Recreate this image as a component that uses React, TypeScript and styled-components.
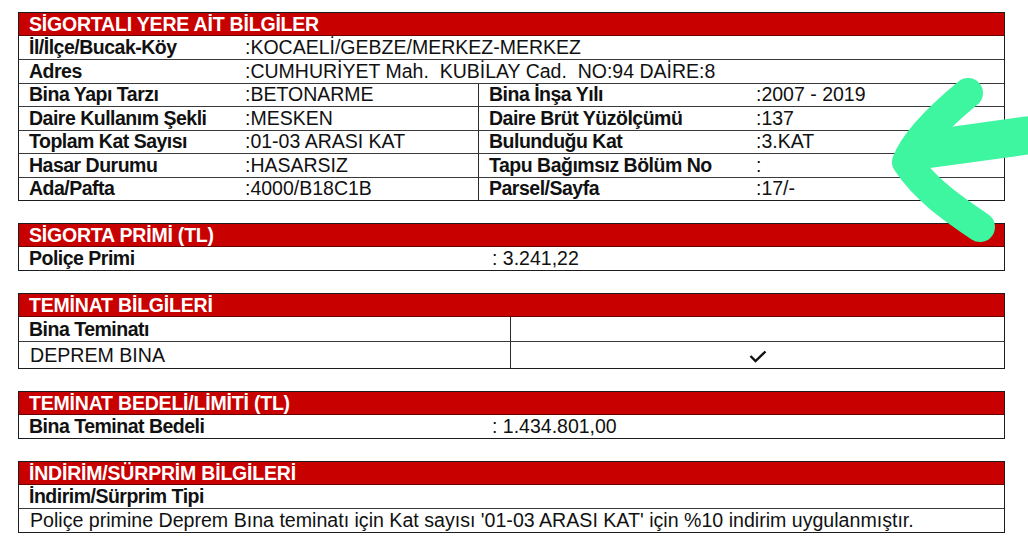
import React from "react";
import styled, { createGlobalStyle, css } from "styled-components";

const Global = createGlobalStyle`
  html, body { margin: 0; padding: 0; background: #fff; }
  body { font-family: "Liberation Sans", Arial, sans-serif; color: #111; }
`;

const Page = styled.div`
  position: relative;
  width: 1028px;
  height: 552px;
  box-sizing: border-box;
  padding: 12px 23px 0 18px;
  background: #fff;
  overflow: hidden;
`;

const Section = styled.section`
  border: 1px solid #1c1c1c;
  & + & {
    margin-top: 22px;
  }
`;

const Header = styled.div`
  height: 22px;
  background: #c90000;
  border-bottom: 1px solid #6a0000;
  color: #fff;
  font-weight: bold;
  font-size: 19.5px;
  letter-spacing: -0.2px;
  line-height: 23px;
  padding-left: 10px;
  white-space: nowrap;
`;

const Row = styled.div<{ $cols?: string; $h?: number; $line?: "dark" | "grey" }>`
  display: grid;
  grid-template-columns: ${(p) => p.$cols || "1fr"};
  height: ${(p) => p.$h ?? 23.5}px;
  box-sizing: border-box;
  & + & {
    border-top: ${(p) => (p.$line === "grey" ? "2px solid #8a8a8a" : "1px solid #3a3a3a")};
  }
`;

const cellBase = css<{ $divider?: boolean; $span?: string }>`
  display: flex;
  align-items: center;
  white-space: nowrap;
  overflow: hidden;
  box-sizing: border-box;
  ${(p) => p.$divider && "border-left: 1px solid #2a2a2a;"}
  ${(p) => p.$span && `grid-column: ${p.$span};`}
`;

const Label = styled.div<{ $divider?: boolean; $span?: string }>`
  ${cellBase};
  padding-left: 10px;
  font-weight: bold;
  font-size: 19.5px;
  letter-spacing: -0.5px;
`;

const Value = styled.div<{ $divider?: boolean; $span?: string; $pad?: number }>`
  ${cellBase};
  padding-left: ${(p) => p.$pad ?? 4}px;
  font-size: 19.5px;
`;

const Text = styled.div`
  display: flex;
  align-items: center;
  padding-left: 11px;
  font-size: 19.6px;
  white-space: nowrap;
`;

const CheckCell = styled.div<{ $divider?: boolean; $span?: string }>`
  ${cellBase};
  justify-content: center;
  padding-top: 2px;
`;

const Overlay = styled.svg`
  position: absolute;
  left: 0;
  top: 0;
  width: 1028px;
  height: 552px;
  pointer-events: none;
`;

const Check = () => (
  <svg width="18" height="13" viewBox="0 0 18 13">
    <polyline points="1.5,6 6.5,11 16.5,1.5" fill="none" stroke="#111" strokeWidth="2.4" />
  </svg>
);

const S1 = "222px 237px 274px 1fr";

const infoRows: [string, string, string, string][] = [
  ["Bina Yapı Tarzı", ":BETONARME", "Bina İnşa Yılı", ":2007 - 2019"],
  ["Daire Kullanım Şekli", ":MESKEN", "Daire Brüt Yüzölçümü", ":137"],
  ["Toplam Kat Sayısı", ":01-03 ARASI KAT", "Bulunduğu Kat", ":3.KAT"],
  ["Hasar Durumu", ":HASARSIZ", "Tapu Bağımsız Bölüm No", ":"],
  ["Ada/Pafta", ":4000/B18C1B", "Parsel/Sayfa", ":17/-"],
];

export default function App() {
  return (
    <>
      <Global />
      <Page>
        <Section>
          <Header>SİGORTALI YERE AİT BİLGİLER</Header>
          <Row $cols={S1} $h={23}>
            <Label>İl/İlçe/Bucak-Köy</Label>
            <Value $span="2 / 5">:KOCAELİ/GEBZE/MERKEZ-MERKEZ</Value>
          </Row>
          <Row $cols={S1}>
            <Label>Adres</Label>
            <Value $span="2 / 5">:CUMHURİYET Mah.&nbsp; KUBİLAY Cad.&nbsp; NO:94 DAİRE:8</Value>
          </Row>
          {infoRows.map(([a, b, c, d]) => (
            <Row $cols={S1} key={a}>
              <Label>{a}</Label>
              <Value>{b}</Value>
              <Label $divider>{c}</Label>
              <Value>{d}</Value>
            </Row>
          ))}
        </Section>

        <Section>
          <Header>SİGORTA PRİMİ (TL)</Header>
          <Row $cols="473px 1fr" $h={23}>
            <Label>Poliçe Primi</Label>
            <Value $pad={0}>: 3.241,22</Value>
          </Row>
        </Section>

        <Section>
          <Header>TEMİNAT BİLGİLERİ</Header>
          <Row $cols="491px 1fr" $h={24}>
            <Label>Bina Teminatı</Label>
            <CheckCell $divider />
          </Row>
          <Row $cols="491px 1fr" $h={27} $line="grey">
            <Text>DEPREM BINA</Text>
            <CheckCell $divider>
              <Check />
            </CheckCell>
          </Row>
        </Section>

        <Section>
          <Header>TEMİNAT BEDELİ/LİMİTİ (TL)</Header>
          <Row $cols="473px 1fr" $h={23}>
            <Label>Bina Teminat Bedeli</Label>
            <Value $pad={0}>: 1.434.801,00</Value>
          </Row>
        </Section>

        <Section>
          <Header>İNDİRİM/SÜRPRİM BİLGİLERİ</Header>
          <Row $h={23}>
            <Label>İndirim/Sürprim Tipi</Label>
          </Row>
          <Row>
            <Text>
              Poliçe primine Deprem Bına teminatı için Kat sayısı '01-03 ARASI KAT' için %10 indirim uygulanmıştır.
            </Text>
          </Row>
        </Section>

        <Overlay viewBox="0 0 1028 552">
          <path
            d="M 968 93 C 945 112, 915 140, 907 162 C 925 190, 955 210, 980 227"
            fill="none"
            stroke="#3ef5a0"
            strokeWidth="30"
            strokeLinecap="round"
            strokeLinejoin="round"
          />
          <path d="M 922 150 L 1045 133" fill="none" stroke="#3ef5a0" strokeWidth="38" strokeLinecap="round" />
        </Overlay>
      </Page>
    </>
  );
}
